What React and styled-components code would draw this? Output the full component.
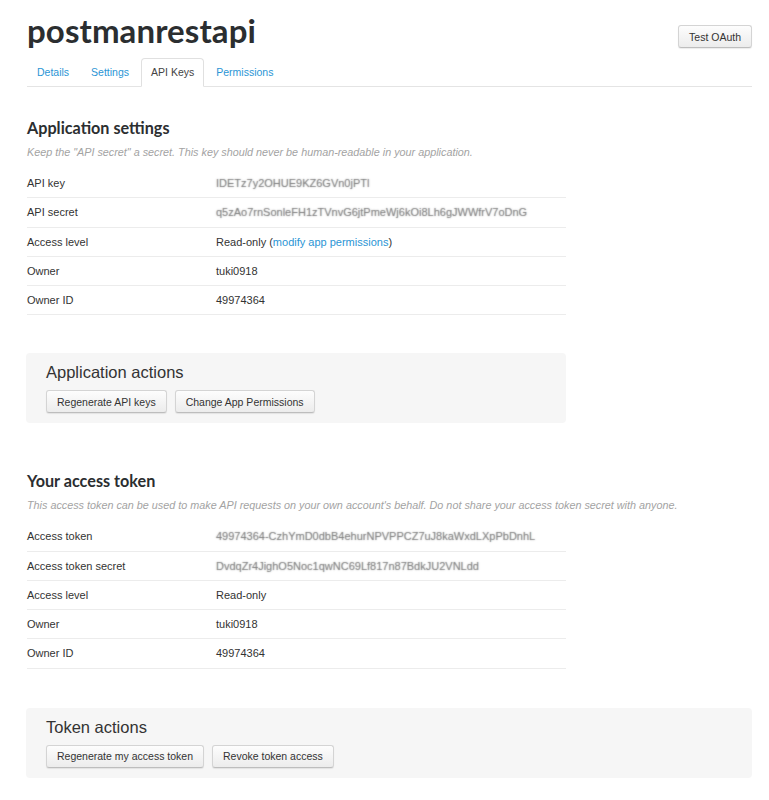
import React from "react";
import styled, { createGlobalStyle } from "styled-components";

const Global = createGlobalStyle`
  html, body { margin: 0; padding: 0; background: #fff; }
  body { font-family: "Liberation Sans", Arial, sans-serif; color: #333; font-size: 11px; }
  * { box-sizing: border-box; }
`;

const Page = styled.div`
  padding: 11px 17px 20px 26px;
  width: 769px;
`;

const Header = styled.div`
  display: flex;
  justify-content: space-between;
  align-items: flex-start;
`;

const Title = styled.h1`
  margin: 0 0 0 1px;
  font-family: Lato, "Open Sans", sans-serif;
  font-weight: 700;
  font-size: 33px;
  line-height: 39px;
  color: #2b2e30;
  letter-spacing: 0.1px;
`;

const Button = styled.button`
  font-family: "Liberation Sans", Arial, sans-serif;
  font-size: 10.5px;
  color: #333;
  height: 23px;
  padding: 0 10px;
  border: 1px solid #d4d4d4;
  border-bottom-color: #bdbdbd;
  border-radius: 3px;
  background: linear-gradient(#fdfdfd, #ececec);
  box-shadow: 0 1px 1px rgba(0, 0, 0, 0.08);
  cursor: pointer;
  margin-top: ${(p) => p.$top || 0}px;
`;

const Tabs = styled.ul`
  display: flex;
  list-style: none;
  margin: 8px 0 0 1px;
  padding: 0;
  border-bottom: 1px solid #e4e4e4;
`;

const Tab = styled.li`
  margin: 0 2px -1px 0;
  padding: 0 9px;
  line-height: 27px;
  font-size: 10.5px;
  border: 1px solid ${(p) => (p.$active ? "#e0e0e0" : "transparent")};
  border-bottom-color: ${(p) => (p.$active ? "#fff" : "transparent")};
  border-radius: 4px 4px 0 0;
  background: ${(p) => (p.$active ? "#fff" : "transparent")};
  color: ${(p) => (p.$active ? "#444" : "#2a95d5")};
`;

const Section = styled.section`
  margin-top: ${(p) => p.$top}px;
  padding-left: 1px;
`;

const Heading = styled.h2`
  margin: 0;
  font-family: Lato, "Open Sans", sans-serif;
  font-weight: 700;
  font-size: 16.2px;
  line-height: 20px;
  color: #2b2e30;
`;

const Note = styled.p`
  margin: 7px 0 9px;
  font-style: italic;
  font-size: 10.8px;
  line-height: 15px;
  color: #a3a3a3;
`;

const Table = styled.div`
  width: 539px;
`;

const Row = styled.div`
  display: grid;
  grid-template-columns: 189px 1fr;
  padding: 6px 0;
  line-height: 16.25px;
  border-bottom: 1px solid #ececec;
`;

const Label = styled.div`
  color: #333;
`;

const Value = styled.div`
  color: #333;
  white-space: nowrap;
`;

const Secret = styled.span`
  color: rgba(130, 130, 130, 0.3);
  text-shadow: 0 0 1.4px rgba(100, 100, 100, 0.85);
`;

const Link = styled.a`
  color: #2a95d5;
  text-decoration: none;
`;

const ActionBox = styled.div`
  margin-top: ${(p) => p.$top}px;
  width: ${(p) => p.$width}px;
  background: #f6f6f6;
  border-radius: 4px;
  padding: 9px 20px 10px;
`;

const ActionTitle = styled.h3`
  margin: 0 0 8px;
  font-family: "Liberation Sans", Arial, sans-serif;
  font-weight: 400;
  font-size: 16.5px;
  line-height: 20px;
  color: #333;
`;

const ButtonRow = styled.div`
  display: flex;
  gap: 8px;
`;

function DataTable({ rows }) {
  return (
    <Table>
      {rows.map(([k, v]) => (
        <Row key={k}>
          <Label>{k}</Label>
          <Value>{v}</Value>
        </Row>
      ))}
    </Table>
  );
}

export default function App() {
  const appRows = [
    ["API key", <Secret>IDETz7y2OHUE9KZ6GVn0jPTl</Secret>],
    ["API secret", <Secret>q5zAo7rnSonleFH1zTVnvG6jtPmeWj6kOi8Lh6gJWWfrV7oDnG</Secret>],
    [
      "Access level",
      <>
        Read-only (<Link href="#">modify app permissions</Link>)
      </>,
    ],
    ["Owner", "tuki0918"],
    ["Owner ID", "49974364"],
  ];
  const tokenRows = [
    ["Access token", <Secret>49974364-CzhYmD0dbB4ehurNPVPPCZ7uJ8kaWxdLXpPbDnhL</Secret>],
    ["Access token secret", <Secret>DvdqZr4JighO5Noc1qwNC69Lf817n87BdkJU2VNLdd</Secret>],
    ["Access level", "Read-only"],
    ["Owner", "tuki0918"],
    ["Owner ID", "49974364"],
  ];
  return (
    <Page>
      <Global />
      <Header>
        <Title>postmanrestapi</Title>
        <Button $top={14}>Test OAuth</Button>
      </Header>
      <Tabs>
        <Tab>Details</Tab>
        <Tab>Settings</Tab>
        <Tab $active>API Keys</Tab>
        <Tab>Permissions</Tab>
      </Tabs>

      <Section $top={31}>
        <Heading>Application settings</Heading>
        <Note>Keep the "API secret" a secret. This key should never be human-readable in your application.</Note>
        <DataTable rows={appRows} />
      </Section>

      <ActionBox $top={38} $width={540}>
        <ActionTitle>Application actions</ActionTitle>
        <ButtonRow>
          <Button>Regenerate API keys</Button>
          <Button>Change App Permissions</Button>
        </ButtonRow>
      </ActionBox>

      <Section $top={48}>
        <Heading>Your access token</Heading>
        <Note>
          This access token can be used to make API requests on your own account's behalf. Do not share your access
          token secret with anyone.
        </Note>
        <DataTable rows={tokenRows} />
      </Section>

      <ActionBox $top={39} $width={726}>
        <ActionTitle>Token actions</ActionTitle>
        <ButtonRow>
          <Button>Regenerate my access token</Button>
          <Button>Revoke token access</Button>
        </ButtonRow>
      </ActionBox>
    </Page>
  );
}
